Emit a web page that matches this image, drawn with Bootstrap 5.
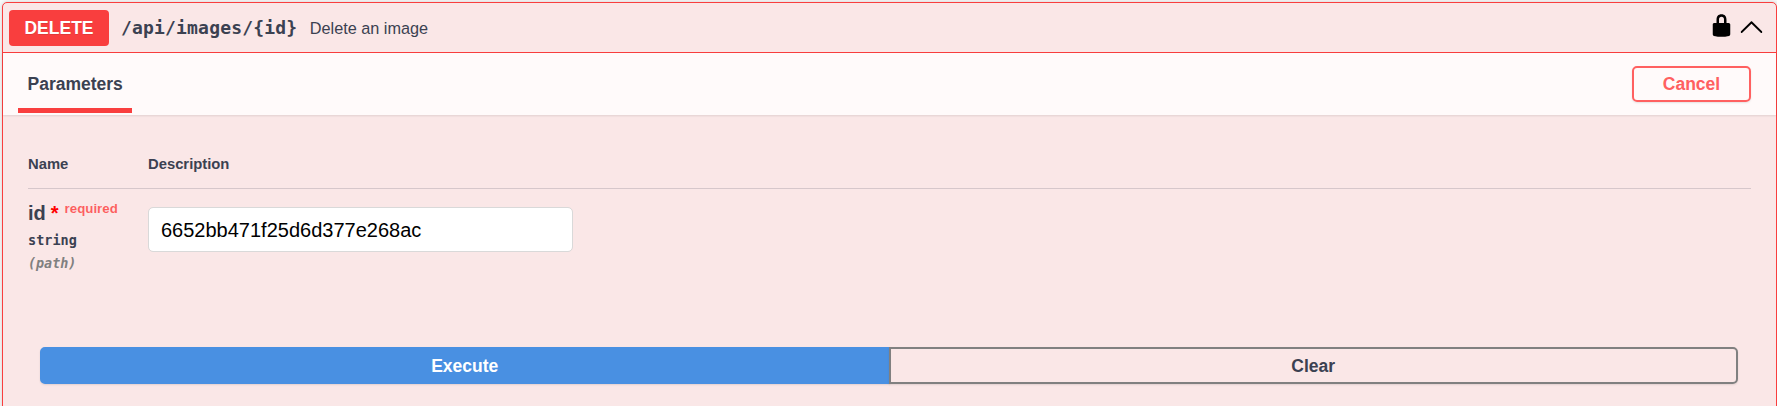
<!DOCTYPE html>
<html lang="en">
<head>
<meta charset="utf-8">
<meta name="viewport" content="width=device-width, initial-scale=1">
<title>Delete an image</title>
<link href="https://cdn.jsdelivr.net/npm/bootstrap@5.3.0/dist/css/bootstrap.min.css" rel="stylesheet">
<style>
body{background:#fafafa;color:#3b4151;font-family:"Liberation Sans",Arial,sans-serif;font-size:17.5px;line-height:20px;overflow:hidden}
.op{margin:2px 0 0 2px;height:420px;border:1px solid #f93e3e;border-radius:5px;background:#fae7e7;box-shadow:0 0 4px rgba(0,0,0,.19)}
.op-head{height:50px;padding:0 12px 0 6px;border-bottom:1px solid #f93e3e}
.method{width:100px;height:36px;border-radius:4px;background:#f93e3e;color:#fff;text-shadow:0 1px 0 rgba(0,0,0,.1)}
.mono{font-family:"DejaVu Sans Mono",monospace;font-weight:700}
.op-path{margin-left:12px;font-size:18px;letter-spacing:.18px}
.op-desc{margin-left:12.5px;font-size:16.25px}
.lock{margin-bottom:5px}
.chevron{margin:0 0 3px 5px}
.op-tabs{height:62px;padding:0 25px 0 15px;background:#fffafa;box-shadow:0 1px 2px rgba(0,0,0,.1)}
.tab-item{width:114px;height:60px;border-bottom:5px solid #f93e3e;padding:21px 9.5px 0}
.btn-op{--bs-btn-font-size:17.5px;--bs-btn-font-weight:700;--bs-btn-line-height:20px;--bs-btn-padding-y:0;--bs-btn-border-width:2px;--bs-btn-border-radius:5px;--bs-btn-color:#3b4151;--bs-btn-border-color:gray;height:37px;box-shadow:0 1px 2px rgba(0,0,0,.1)}
.btn-cancel{--bs-btn-color:#ff6060;--bs-btn-border-color:#ff6060;width:119px;height:36px}
.btn-exec{--bs-btn-color:#fff;--bs-btn-bg:#4990e2;--bs-btn-border-color:#4990e2}
.params{margin:0 25px}
.params-head{padding-top:39px;height:74px;font-size:14.8px;border-bottom:1px solid #d6c7cb}
.name-col{width:120px}
.param-name{font-size:20px;line-height:24px;margin-top:12px}
.star{color:#f00;font-size:20px;margin-left:5px;line-height:24px}
.req{color:rgba(255,0,0,.6);font-size:13.3px;line-height:15px;margin-left:6px}
.param-type{font-size:13.5px;margin-top:5px}
.param-in{font-size:13.4px;margin-top:4px;color:gray;font-style:italic}
.param-value{width:425px;height:45px;margin-top:18px;padding:2px 12px 0;font-size:20px;color:#000;border:1px solid #d9d9d9;border-radius:5px}
.actions{margin:0 38px 0 37px;padding-top:73px}
</style>
<script src="https://cdn.jsdelivr.net/npm/bootstrap@5.3.0/dist/js/bootstrap.bundle.min.js"></script>
</head>
<body>
<main class="op">
  <header class="op-head d-flex align-items-center">
    <span class="method d-flex align-items-center justify-content-center fw-bold">DELETE</span>
    <span class="op-path mono">/api/images/{id}</span>
    <span class="op-desc">Delete an image</span>
    <svg class="lock ms-auto" width="25" height="25" viewBox="0 0 20 20" aria-label="Locked"><path d="M15.8 8H14V5.6C14 2.703 12.665 1 10 1 7.334 1 6 2.703 6 5.6V8H4c-.553 0-1 .646-1 1.199V17c0 .549.428 1.139.951 1.307l1.197.387C5.672 18.861 6.55 19 7.1 19h5.8c.549 0 1.428-.139 1.951-.307l1.196-.387c.524-.167.953-.757.953-1.306V9.199C17 8.646 16.352 8 15.8 8zM12 8H8V5.199C8 3.754 8.797 3 10 3c1.203 0 2 .754 2 2.199V8z"/></svg>
    <svg class="chevron" width="25" height="25" viewBox="0 0 20 20" aria-label="Collapse"><path d="M17.418 14.908c.272.281.709.281.979 0s.271-.736 0-1.016l-7.908-7.83c-.27-.281-.709-.281-.979 0l-7.908 7.83c-.272.279-.272.734 0 1.016.271.281.709.281.979 0L10 7.767l7.418 7.141z"/></svg>
  </header>
  <div class="op-tabs d-flex justify-content-between">
    <div class="tab-item fw-bold">Parameters</div>
    <button class="btn btn-op btn-cancel align-self-center" type="button">Cancel</button>
  </div>
  <section class="params">
    <div class="params-head d-flex fw-bold"><div class="name-col">Name</div><div>Description</div></div>
    <div class="d-flex">
      <div class="name-col">
        <div class="param-name d-flex fw-bold">id<span class="star">*</span><span class="req">required</span></div>
        <div class="param-type mono">string</div>
        <div class="param-in mono">(path)</div>
      </div>
      <input class="form-control param-value" type="text" value="6652bb471f25d6d377e268ac" aria-label="id">
    </div>
  </section>
  <div class="actions btn-group d-flex">
    <button class="btn btn-op btn-exec w-50" type="button">Execute</button>
    <button class="btn btn-op w-50" type="button">Clear</button>
  </div>
</main>
</body>
</html>
